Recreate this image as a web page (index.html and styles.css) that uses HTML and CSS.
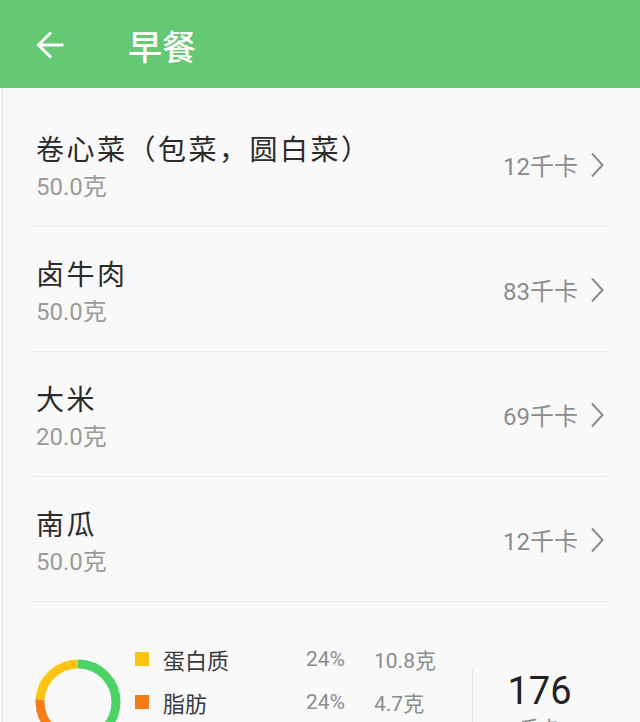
FILE: index.html
```html
<!DOCTYPE html>
<html lang="zh-CN">

<head>
    <meta charset="UTF-8">
    <meta name="viewport" content="width=device-width, initial-scale=1.0">
    <title>早餐</title>
    <link rel="stylesheet" href="styles.css">
</head>

<body>

    <div class="topbar">
        <svg class="back" width="30" height="30" viewBox="0 0 30 30">
            <path d="M27 15H4M15 3.5L3.5 15L15 26.5" fill="none" stroke="#fff" stroke-width="3" stroke-linecap="square" />
        </svg>
        <span class="title">早餐</span>
    </div>

    <div class="content">
        <div class="list">
            <div class="row">
                <div class="info">
                    <div class="name">卷心菜（包菜，圆白菜）</div>
                    <div class="weight">50.0克</div>
                </div>
                <div class="kcal">12千卡</div>
                <svg class="chevron" width="14" height="26" viewBox="0 0 14 26">
                    <path d="M2 1.5L12.5 13L2 24.5" fill="none" stroke="#8c8c8c" stroke-width="2" />
                </svg>
            </div>
            <div class="row">
                <div class="info">
                    <div class="name">卤牛肉</div>
                    <div class="weight">50.0克</div>
                </div>
                <div class="kcal">83千卡</div>
                <svg class="chevron" width="14" height="26" viewBox="0 0 14 26">
                    <path d="M2 1.5L12.5 13L2 24.5" fill="none" stroke="#8c8c8c" stroke-width="2" />
                </svg>
            </div>
            <div class="row">
                <div class="info">
                    <div class="name">大米</div>
                    <div class="weight">20.0克</div>
                </div>
                <div class="kcal">69千卡</div>
                <svg class="chevron" width="14" height="26" viewBox="0 0 14 26">
                    <path d="M2 1.5L12.5 13L2 24.5" fill="none" stroke="#8c8c8c" stroke-width="2" />
                </svg>
            </div>
            <div class="row">
                <div class="info">
                    <div class="name">南瓜</div>
                    <div class="weight">50.0克</div>
                </div>
                <div class="kcal">12千卡</div>
                <svg class="chevron" width="14" height="26" viewBox="0 0 14 26">
                    <path d="M2 1.5L12.5 13L2 24.5" fill="none" stroke="#8c8c8c" stroke-width="2" />
                </svg>
            </div>
        </div>

        <div class="summary">
            <!-- ring: circumference 2*pi*38 = 238.76 -->
            <svg class="ring" width="86" height="86" viewBox="0 0 86 86">
                <g transform="rotate(-90 43 43)">
                    <circle cx="43" cy="43" r="38" fill="none" stroke="#4cd265" stroke-width="9"
                        stroke-dasharray="124.16 238.76" stroke-dashoffset="0" />
                    <circle cx="43" cy="43" r="38" fill="none" stroke="#f57d17" stroke-width="9"
                        stroke-dasharray="57.3 238.76" stroke-dashoffset="-124.16" />
                    <circle cx="43" cy="43" r="38" fill="none" stroke="#fdc512" stroke-width="9"
                        stroke-dasharray="57.3 238.76" stroke-dashoffset="-181.46" />
                </g>
            </svg>

            <div class="legend">
                <span class="dot protein"></span>
                <span class="label">蛋白质</span>
                <span class="pct">24%</span>
                <span class="amount">10.8克</span>

                <span class="dot fat"></span>
                <span class="label">脂肪</span>
                <span class="pct">24%</span>
                <span class="amount">4.7克</span>

                <span class="legend-gap"></span>
            </div>

            <div class="divider"></div>

            <div class="total">
                <div class="total-num">176</div>
                <div class="total-unit">千卡</div>
            </div>
        </div>
    </div>

</body>

</html>
```

FILE: styles.css
```css
body {
    margin: 0;
    background-color: #f9f9f9;
    font-family: Roboto, "Noto Sans CJK SC", sans-serif;
    overflow: hidden;
}

.topbar {
    height: 88px;
    background-color: #65c973;
    display: flex;
    align-items: center;
    padding-left: 35px;
    box-sizing: border-box;
}

.back {
    display: block;
    margin-top: 2px;
}

.title {
    margin-left: 63px;
    color: #fff;
    font-size: 34px;
    font-weight: 500;
    font-family: "Noto Sans CJK SC", sans-serif;
    margin-top: 2px;
}

.content {
    border-left: 1px solid #e3e3e3;
    margin-left: 2px;
}

.list {
    padding: 14px 34px 0 31px;
}

.row {
    height: 125px;
    box-sizing: border-box;
    border-bottom: 1px solid #e9e9e9;
    display: flex;
    align-items: center;
    padding: 4px 2px 0 2px;
}

.info {
    flex: 1;
    margin-top: 6px;
}

.name {
    font-size: 28px;
    line-height: 36px;
    color: #2b2b2b;
    letter-spacing: 2.5px;
}

.weight {
    font-size: 24px;
    line-height: 36px;
    color: #9b9b9b;
}

.kcal {
    font-size: 24px;
    color: #8c8c8c;
    margin-right: 12px;
    margin-bottom: 4px;
}

.chevron {
    display: block;
    margin-bottom: 2px;
}

.summary {
    height: 200px;
    display: flex;
    align-items: center;
    padding-left: 32px;
}

.ring {
    display: block;
}

.legend {
    display: grid;
    grid-template-columns: 28px 143px 68px 98px;
    grid-auto-rows: 43px;
    align-items: center;
    margin-left: 14px;
    font-size: 21px;
}

.legend-gap {
    grid-column: 1 / -1;
}

.dot {
    width: 14px;
    height: 14px;
}

.protein {
    background-color: #fdc512;
}

.fat {
    background-color: #f57d17;
}

.label {
    color: #3c3c3c;
    font-size: 22px;
}

.pct,
.amount {
    color: #8c8c8c;
}

.divider {
    width: 1px;
    height: 64px;
    background-color: #e3e3e3;
}

.total {
    flex: 1;
    text-align: center;
    padding-right: 34px;
    margin-top: 6px;
}

.total-num {
    font-size: 38px;
    line-height: 44px;
    color: #222;
}

.total-unit {
    font-size: 20px;
    color: #8c8c8c;
}
```
